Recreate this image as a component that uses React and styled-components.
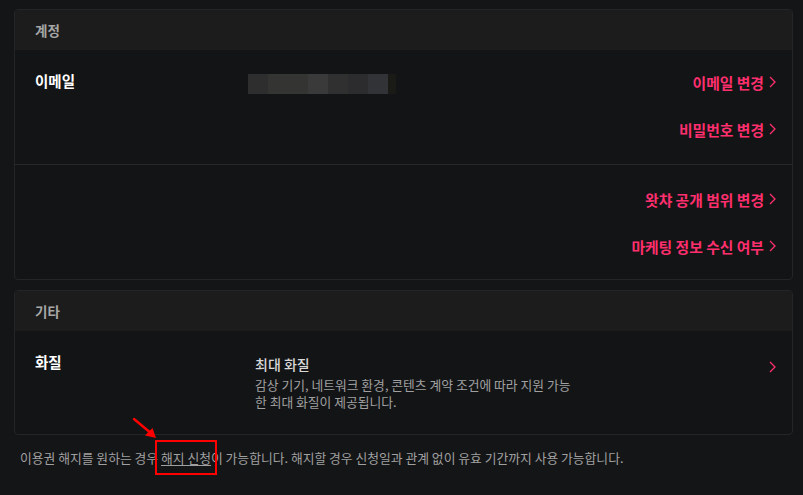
import React from "react";
import styled, { createGlobalStyle } from "styled-components";

const Global = createGlobalStyle`
  html, body { margin: 0; padding: 0; background: #141517; }
  body { font-family: "Noto Sans CJK KR", "Noto Sans", sans-serif; color: #fff; }
`;

const Page = styled.div`
  padding: 9px 10px 20px 14px;
  display: flex;
  flex-direction: column;
  gap: 10px;
`;

const Card = styled.section`
  border: 1px solid #242527;
  border-radius: 4px;
  background: #131416;
  overflow: hidden;
`;

const CardHeader = styled.h2`
  margin: 0;
  height: 40px;
  display: flex;
  align-items: center;
  padding: 0 20px;
  background: #1c1c1c;
  color: #a6a6a6;
  font-size: 13.5px;
  font-weight: 700;
`;

const Row = styled.div`
  display: grid;
  grid-template-columns: 213px 1fr auto;
  align-items: start;
  padding: ${(p) => p.$pad || "22px 16px 25px 20px"};
  & + & { border-top: 1px solid #27282a; }
`;

const Label = styled.div`
  font-size: 14.5px;
  font-weight: 700;
  line-height: 18px;
  color: #fff;
`;

const Blur = styled.div`
  display: flex;
  height: 20px;
  margin-top: 2px;
`;

const BlurCell = styled.div`
  height: 20px;
  background: ${(p) => p.$c};
`;

const Links = styled.div`
  display: flex;
  flex-direction: column;
  align-items: flex-end;
  gap: 27px;
`;

const LinkBtn = styled.a`
  display: flex;
  align-items: center;
  gap: 5px;
  height: 20px;
  color: #ff2f6e;
  font-size: 14.8px;
  font-weight: 700;
  text-decoration: none;
  cursor: pointer;
`;

const Chevron = () => (
  <svg width="7" height="12" viewBox="0 0 7 12" fill="none">
    <path d="M1 1l5 5-5 5" stroke="#ff2f6e" strokeWidth="1.3" />
  </svg>
);

const Quality = styled.div`
  display: flex;
  flex-direction: column;
  margin-left: 7px;
`;

const QualityTitle = styled.div`
  font-size: 14px;
  font-weight: 500;
  color: #d8d8d8;
  line-height: 20px;
  margin-top: 1px;
  margin-bottom: 2px;
`;

const QualityDesc = styled.div`
  font-size: 12.8px;
  color: #a0a0a0;
  line-height: 17px;
`;

const ChevronCell = styled.div`
  padding-top: 1px;
`;

const Footer = styled.p`
  margin: 4px 0 0 6px;
  font-size: 12.8px;
  line-height: 18px;
  color: #a0a0a0;
`;

const Marked = styled.span`
  position: relative;
  text-decoration: underline;
  text-underline-offset: 2px;
  &::after {
    content: "";
    position: absolute;
    left: -6px;
    right: -6px;
    top: -8px;
    bottom: -8px;
    border: 2px solid #ff0000;
    pointer-events: none;
  }
`;

const Arrow = styled.svg`
  position: absolute;
  left: -29px;
  top: -31px;
  overflow: visible;
`;

const blurColors = [
  ["#2d2e2d", 20],
  ["#343433", 40],
  ["#393a39", 20],
  ["#2f302f", 20],
  ["#2c2c2e", 20],
  ["#323337", 20],
  ["#1a1a17", 8],
];

export default function App() {
  return (
    <>
      <Global />
      <Page>
        <Card>
          <CardHeader>계정</CardHeader>
          <Row>
            <Label>이메일</Label>
            <Blur>
              {blurColors.map(([c, w], i) => (
                <BlurCell key={i} $c={c} style={{ width: w }} />
              ))}
            </Blur>
            <Links>
              <LinkBtn>이메일 변경 <Chevron /></LinkBtn>
              <LinkBtn>비밀번호 변경 <Chevron /></LinkBtn>
            </Links>
          </Row>
          <Row $pad="24px 16px 23px 20px">
            <div />
            <div />
            <Links>
              <LinkBtn>왓챠 공개 범위 변경 <Chevron /></LinkBtn>
              <LinkBtn>마케팅 정보 수신 여부 <Chevron /></LinkBtn>
            </Links>
          </Row>
        </Card>
        <Card>
          <CardHeader>기타</CardHeader>
          <Row $pad="22px 16px 24px 20px">
            <Label>화질</Label>
            <Quality>
              <QualityTitle>최대 화질</QualityTitle>
              <QualityDesc>
                감상 기기, 네트워크 환경, 콘텐츠 계약 조건에 따라 지원 가능
                <br />한 최대 화질이 제공됩니다.
              </QualityDesc>
            </Quality>
            <ChevronCell>
              <Chevron />
            </ChevronCell>
          </Row>
        </Card>
        <Footer>
          이용권 해지를 원하는 경우{" "}
          <Marked>
            해지 신청
            <Arrow width="26" height="22" viewBox="0 0 26 22">
              <path d="M2 2L20 17" stroke="#ff0000" strokeWidth="2.4" strokeLinecap="round" />
              <path d="M24 21L13 18.5L20.5 11Z" fill="#ff0000" />
            </Arrow>
          </Marked>
          이 가능합니다. 해지할 경우 신청일과 관계 없이 유효 기간까지 사용 가능합니다.
        </Footer>
      </Page>
    </>
  );
}
